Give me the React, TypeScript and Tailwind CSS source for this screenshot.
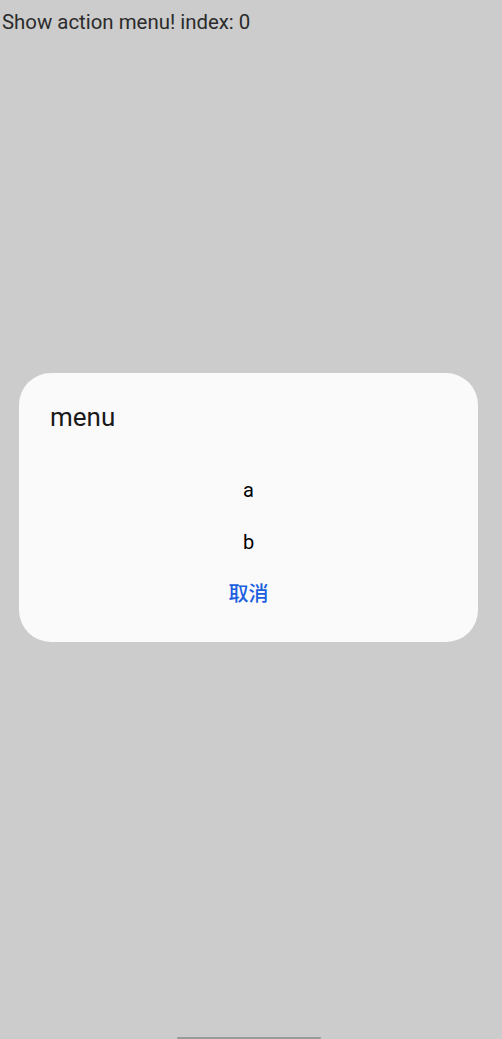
export default function App() {
  return (
    <div
      className="relative h-[1039px] w-[502px] overflow-hidden bg-[#cccccc]"
      style={{ fontFamily: 'Roboto, "Noto Sans CJK SC", sans-serif' }}
    >
      <p className="pl-[2px] pt-[9px] text-[20.4px] leading-[27px] text-[#2b2b2b]">
        Show action menu! index: 0
      </p>

      {/* action menu dialog */}
      <div className="absolute left-[19px] top-[373px] flex h-[269px] w-[459px] flex-col rounded-[32px] bg-[#fafafa]">
        <div className="h-[91px] pl-[31px] pt-[28px] text-[26px] leading-[33px] text-[#1a1a1a]">
          menu
        </div>
        <div className="flex h-[52px] items-center justify-center text-[20px] text-black">a</div>
        <div className="flex h-[52px] items-center justify-center text-[20px] text-black">b</div>
        <div className="flex h-[52px] items-center justify-center text-[20px] font-medium text-[#1b5fe0]">
          取消
        </div>
      </div>

      <div className="absolute bottom-0 left-[177px] h-[2px] w-[144px] rounded-full bg-[#9a9a9a]" />
    </div>
  );
}
